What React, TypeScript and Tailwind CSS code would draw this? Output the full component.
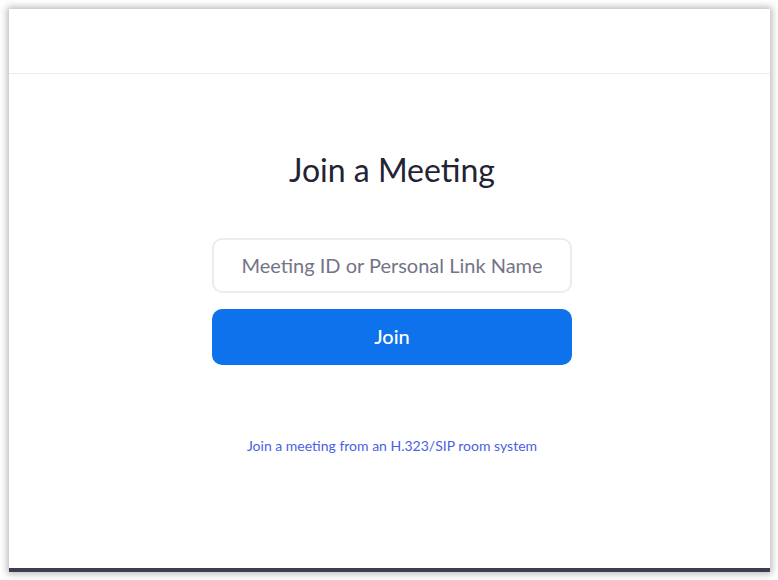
export default function App() {
  return (
    <div className="w-[778px] h-[580px] bg-white pl-[9px] pt-[9px] font-['Lato','Liberation_Sans',sans-serif]">
      <div className="flex h-[563px] w-[761px] flex-col bg-white shadow-[0_0_7px_2px_rgba(0,0,0,0.28)]">
        {/* ── Header ─────────────────────────────────────────── */}
        <div className="h-[65px] shrink-0 border-b border-[#ececec]" />

        {/* ── Body ───────────────────────────────────────────── */}
        <div className="flex flex-1 flex-col items-center pl-[5px]">
          <h1 className="mt-[77px] text-[32px] leading-[38px] text-[#232333]">Join a Meeting</h1>

          <input
            type="text"
            placeholder="Meeting ID or Personal Link Name"
            className="mt-[49px] h-[55px] w-[360px] rounded-[10px] border-2 border-[#ececec] bg-white px-4 pb-[2px] text-center text-[20px] text-[#232333] outline-none placeholder:text-[#747487]"
          />

          <button className="mt-[16px] h-[56px] w-[360px] rounded-[10px] bg-[#0e72ed] pb-[3px] text-[20px] font-medium text-white">
            Join
          </button>

          <a href="#" className="mt-[72px] text-[14px] leading-[18px] text-[#4a5fe3]">
            Join a meeting from an H.323/SIP room system
          </a>
        </div>

        {/* ── Bottom bar ─────────────────────────────────────── */}
        <div className="h-[4px] shrink-0 bg-[#3b3d50]" />
      </div>
    </div>
  )
}
